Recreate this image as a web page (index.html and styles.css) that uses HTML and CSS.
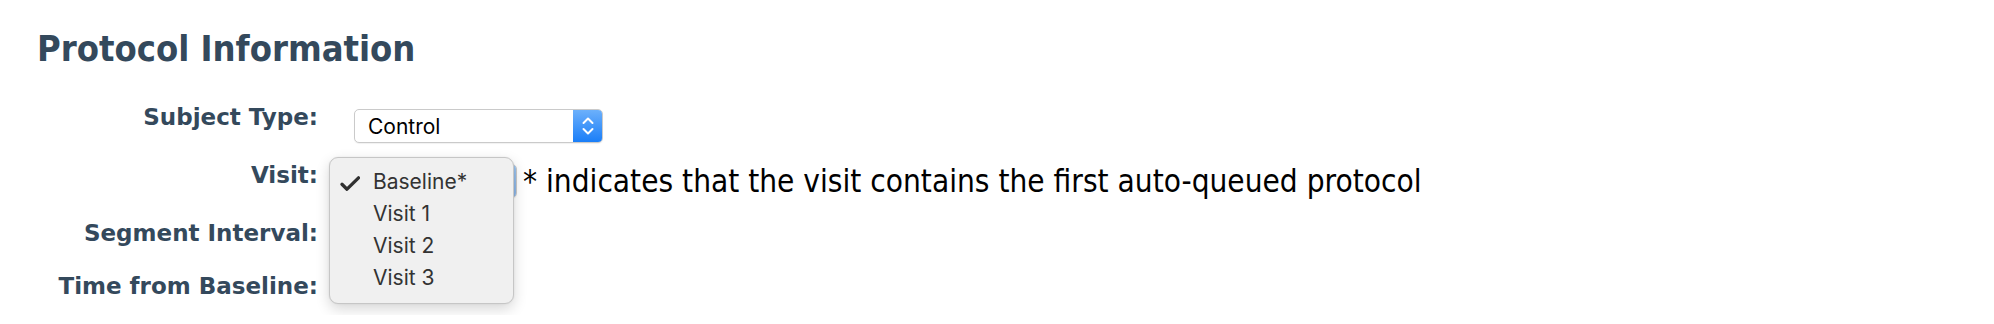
FILE: index.html
```html
<!DOCTYPE html>
<html lang="en">
<head>
<meta charset="utf-8">
<title>Protocol Information</title>
<link rel="stylesheet" href="styles.css">
</head>
<body>
<div class="page">
  <h1 class="title">Protocol Information</h1>
  <div class="form">
    <div class="row row-1">
      <div class="label">Subject Type:</div>
      <div class="select select-wide">
        <span class="select-text">Control</span>
        <span class="stepper">
          <svg width="12" height="20" viewBox="0 0 12 20"><path d="M1.5 7 L6 2.5 L10.5 7" fill="none" stroke="#fff" stroke-width="2" stroke-linecap="round" stroke-linejoin="round"/><path d="M1.5 13 L6 17.5 L10.5 13" fill="none" stroke="#fff" stroke-width="2" stroke-linecap="round" stroke-linejoin="round"/></svg>
        </span>
      </div>
    </div>
    <div class="row row-2">
      <div class="label">Visit:</div>
      <div class="select-wrap">
        <div class="select select-narrow">
          <span class="select-text"></span>
          <span class="stepper stepper-focus"></span>
        </div>
        <div class="menu">
          <div class="menu-item checked">
            <svg class="check" width="20" height="15" viewBox="0 0 20 15"><path d="M2 8.3 L7 13.2 L18.5 1.8" fill="none" stroke="#303030" stroke-width="3.3" stroke-linecap="round" stroke-linejoin="round"/></svg>Baseline*</div>
          <div class="menu-item">Visit 1</div>
          <div class="menu-item">Visit 2</div>
          <div class="menu-item">Visit 3</div>
        </div>
      </div>
      <div class="note">* indicates that the visit contains the first auto-queued protocol</div>
    </div>
    <div class="row row-3">
      <div class="label">Segment Interval:</div>
    </div>
    <div class="row row-4">
      <div class="label">Time from Baseline:</div>
      <div class="value">g</div>
    </div>
  </div>
</div>
</body>
</html>
```
FILE: styles.css
```css
html, body {
  margin: 0;
  padding: 0;
  background: #ffffff;
}

.page {
  padding-top: 27px;
  font-family: "DejaVu Sans Condensed", "DejaVu Sans", sans-serif;
  font-stretch: condensed;
}

.title {
  margin: 0 0 35px 37px;
  font-size: 36px;
  line-height: 44px;
  font-weight: bold;
  color: #34495c;
}

.form {
  display: flex;
  flex-direction: column;
}

.row {
  display: flex;
  align-items: flex-start;
}

.row-1 { height: 58px; }
.row-2 { height: 58px; }
.row-3 { height: 53px; }
.row-4 { height: 40px; }

.label {
  width: 318px;
  margin-right: 36px;
  margin-top: -1px;
  text-align: right;
  font-family: "DejaVu Sans", sans-serif;
  font-stretch: normal;
  font-size: 23px;
  line-height: 25px;
  font-weight: bold;
  color: #34495c;
  flex: none;
}

.select {
  display: flex;
  align-items: center;
  box-sizing: border-box;
  height: 34px;
  background: #ffffff;
  border: 1px solid #cacaca;
  border-radius: 5px;
  box-shadow: 0 1px 1px rgba(0, 0, 0, 0.06);
  overflow: hidden;
  font-family: Inter, "Liberation Sans", sans-serif;
  font-stretch: normal;
  font-size: 21px;
  color: #000000;
}

.select-wide {
  width: 249px;
  margin-top: 3px;
}

.select-narrow {
  width: 163px;
}

.select-text {
  flex: 1;
  padding-left: 13px;
  line-height: 32px;
  padding-top: 2px;
}

.stepper {
  width: 29px;
  height: 100%;
  display: flex;
  align-items: center;
  justify-content: center;
  background: linear-gradient(#6cb0fb, #1a7ef8);
}

.stepper-focus {
  background: linear-gradient(#9cc4ef, #8ab4e6);
}

.select-wrap {
  position: relative;
  flex: none;
}

.menu {
  position: absolute;
  left: -25px;
  top: -7px;
  width: 185px;
  box-sizing: border-box;
  padding: 8px 0 9px;
  background: #f0f0f0;
  border: 1px solid #c6c6c6;
  border-radius: 9px;
  box-shadow: 0 5px 14px rgba(0, 0, 0, 0.16), 0 0 2px rgba(0, 0, 0, 0.08);
  font-family: Inter, "Liberation Sans", sans-serif;
  font-stretch: normal;
  font-size: 21px;
  color: #333333;
}

.menu-item {
  position: relative;
  height: 32px;
  line-height: 32px;
  padding-left: 43px;
}

.check {
  position: absolute;
  left: 10px;
  top: 10px;
}

.note {
  margin-left: 6px;
  margin-top: -1px;
  font-size: 31.3px;
  line-height: 36px;
  color: #000000;
  white-space: nowrap;
}

.value {
  margin-top: -7px;
  font-size: 31px;
  line-height: 36px;
  color: #000000;
}
```
